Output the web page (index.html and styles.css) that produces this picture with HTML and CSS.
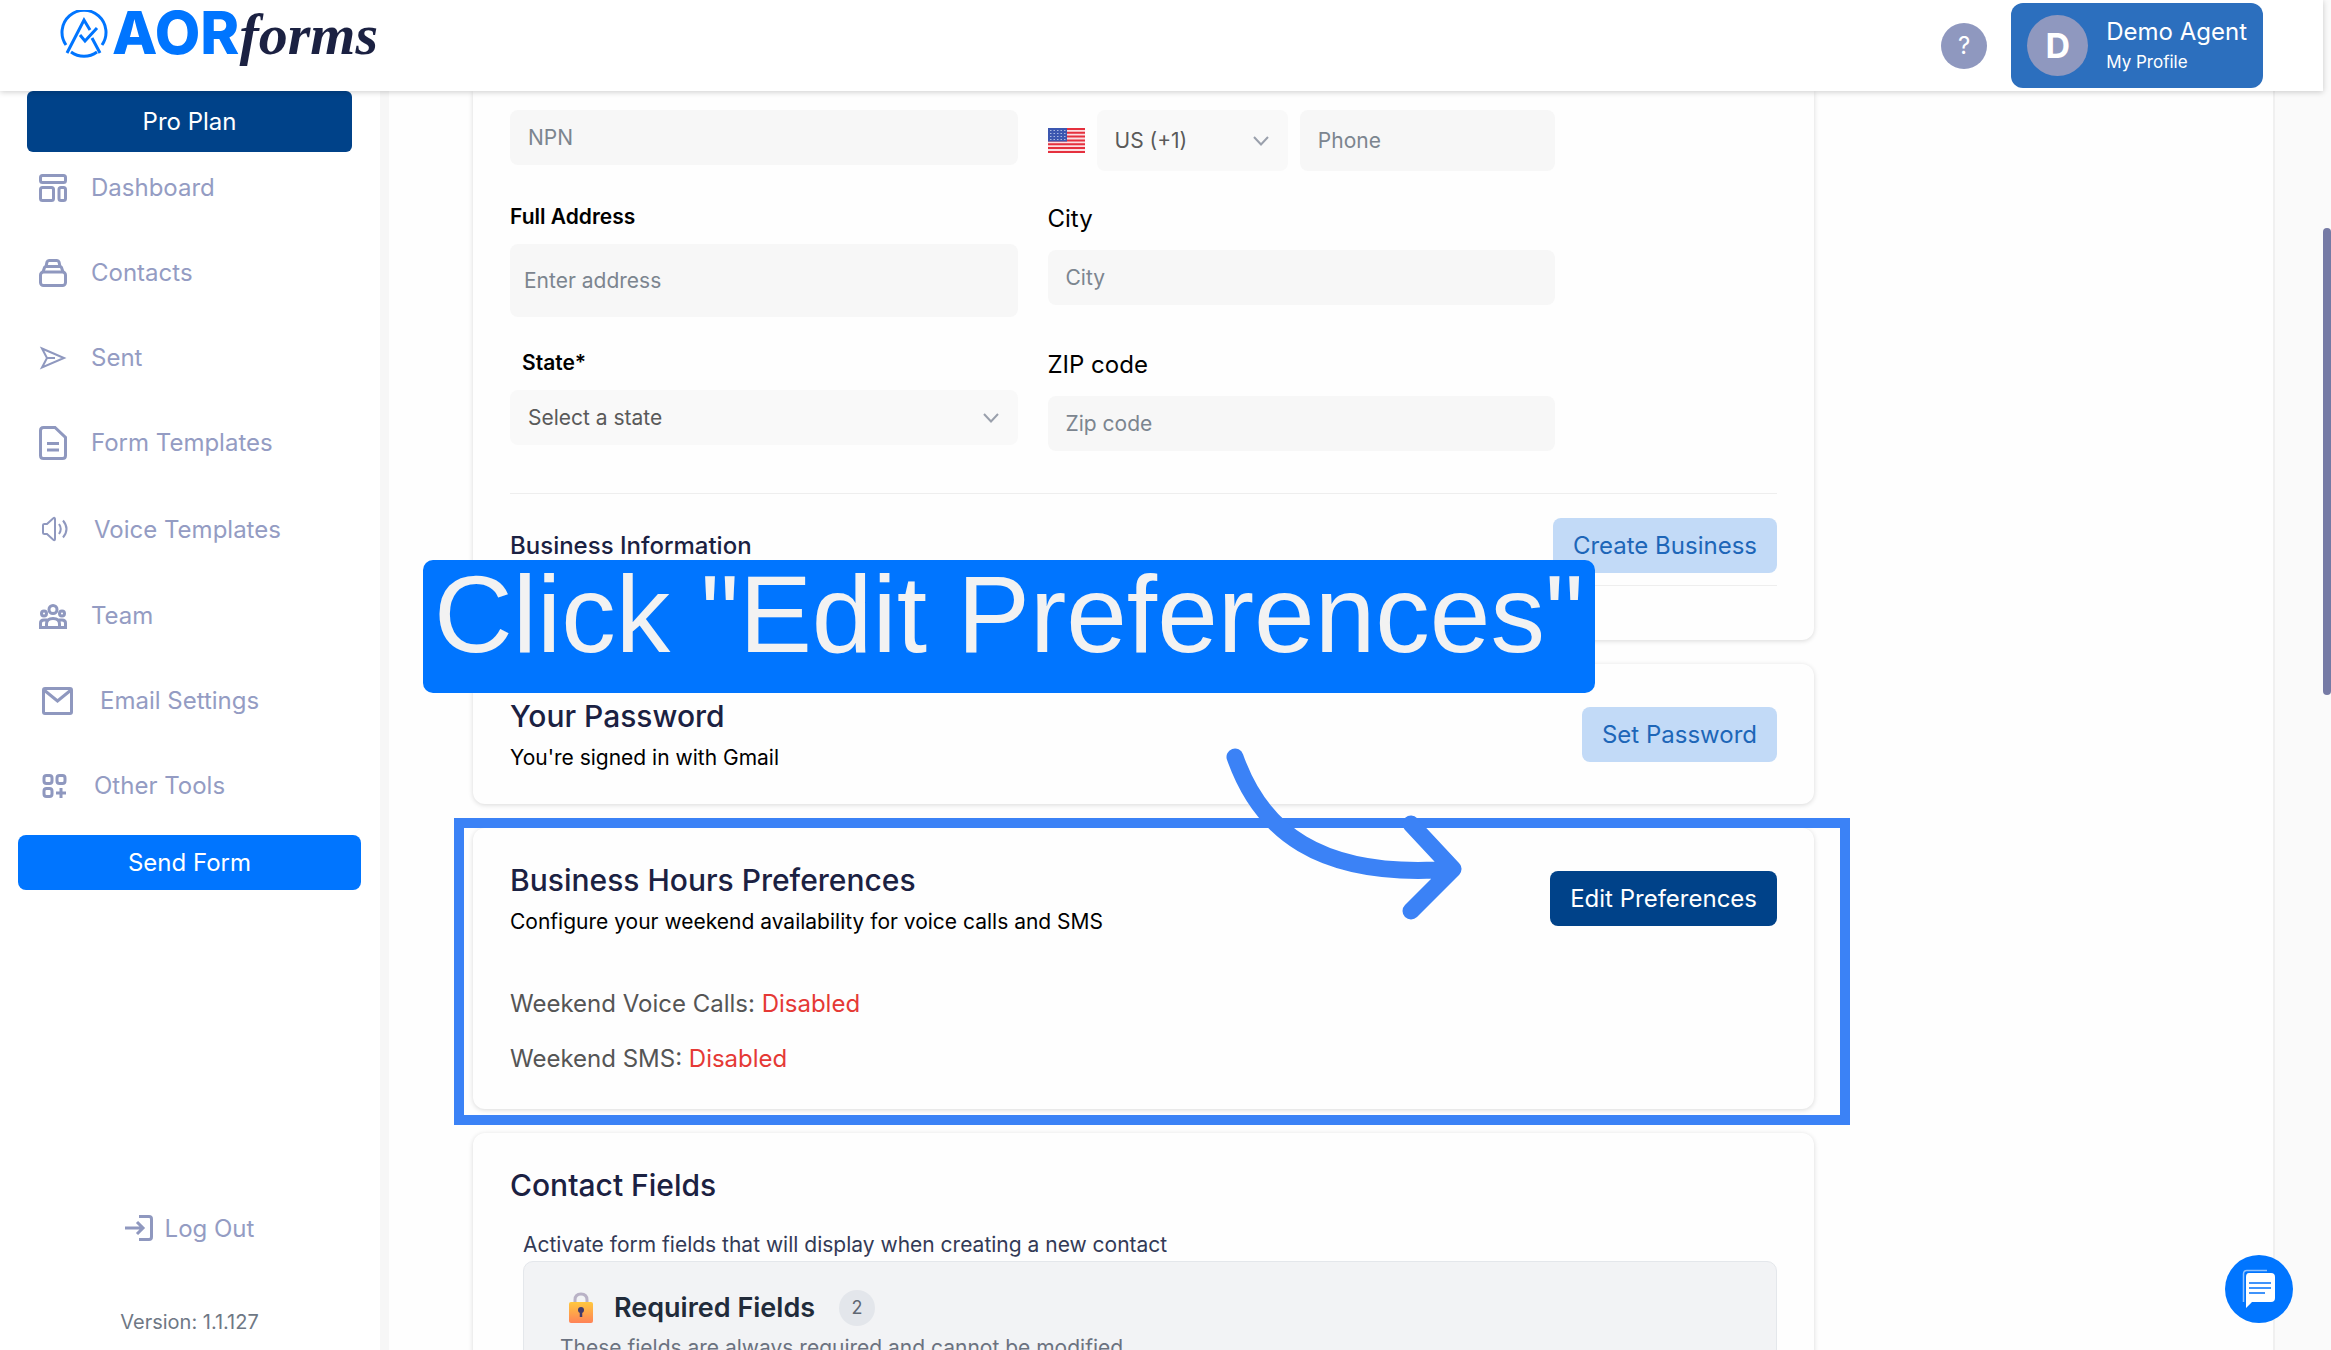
FILE: index.html
```html
<!DOCTYPE html>
<html lang="en">
<head>
<meta charset="utf-8">
<meta name="viewport" content="width=device-width, initial-scale=1">
<title>AORforms - My Profile</title>
<link rel="stylesheet" href="styles.css">
</head>

<body>
<header class="topbar">
  <a class="logo" href="#">
    <svg class="logo-mark" viewBox="0 0 48 48" fill="none" stroke="#0075ff" stroke-width="3">
      <path d="M6 35A22 22 0 1 1 42 35" />
      <path d="M11 42A22 22 0 0 0 37 42" />
      <path d="M7 43L24 10L30 20M40 43L32 28" />
      <path d="M20 25L25 31L37 18" />
    </svg>
    <span class="logo-aor">AOR</span><span class="logo-forms">forms</span>
  </a>
  <div class="topbar-right">
    <button class="help" type="button">?</button>
    <a class="profile" href="#">
      <span class="avatar">D</span>
      <span class="profile-text">
        <span class="profile-name">Demo Agent</span>
        <span class="profile-link">My Profile</span>
      </span>
    </a>
  </div>
</header>

<div class="layout">
  <aside class="sidebar">
    <button class="plan" type="button">Pro Plan</button>
    <nav>
      <ul class="menu">
        <li><a href="#">
          <svg class="icon" width="28" height="28" viewBox="0 0 28 28"><rect x="1.5" y="1.5" width="25" height="7" rx="2"/><rect x="1.5" y="13.5" width="13" height="13" rx="2"/><rect x="20" y="13.5" width="6.5" height="13" rx="2"/></svg>
          Dashboard</a></li>
        <li><a href="#">
          <svg class="icon" width="28" height="28" viewBox="0 0 28 28"><rect x="1.5" y="13" width="25" height="13.5" rx="3"/><path d="M4 13L5.500 8.500Q6 7.500 7 7.500H21Q22 7.500 22.500 8.500L24 13M7 7.500L8 3Q8.500 1.500 10 1.500H18Q19.500 1.500 20 3L21 7.500"/></svg>
          Contacts</a></li>
        <li><a href="#">
          <svg class="icon thin" width="28" height="28" viewBox="0 0 28 28"><path d="M3 4.500L25 14L3 23.500L8 14ZM8 14H16"/></svg>
          Sent</a></li>
        <li><a href="#">
          <svg class="icon" width="28" height="34" viewBox="0 0 28 34"><path d="M4.500 1.500H16L26.500 11.500V29.500Q26.500 32.500 23.500 32.500H4.500Q1.500 32.500 1.500 29.500V4.500Q1.500 1.500 4.500 1.500ZM8 17.500H20M8 24H20"/></svg>
          Form Templates</a></li>
        <li class="voice"><a href="#">
          <svg class="icon thin" width="31" height="28" viewBox="0 0 31 28"><path d="M4 10Q4 9 5.500 9H8L14 3.500Q16 2 16 4V24Q16 26 14 24.500L8 19H5.500Q4 19 4 18ZM20 9Q23.500 14 20 19M24 5.500Q31 14 24 22.500"/></svg>
          Voice Templates</a></li>
        <li><a href="#">
          <svg class="icon" width="28" height="28" viewBox="0 0 28 28"><circle cx="14" cy="7.500" r="4"/><circle cx="5" cy="11.500" r="2.500"/><circle cx="23" cy="11.500" r="2.500"/><path d="M7.500 25.500V22Q7.500 16.500 14 16.500Q20.500 16.500 20.500 22V25.500ZM7.500 25.500H1.500V21Q1.500 18 5 18H8M20.500 25.500H26.500V21Q26.500 18 23 18H20"/></svg>
          Team</a></li>
        <li><a href="#">
          <svg class="icon" width="37" height="30" viewBox="0 0 37 30"><rect x="4.500" y="2.500" width="28" height="25" rx="1.500"/><path d="M5 4L18.500 15L32 4"/></svg>
          Email Settings</a></li>
        <li><a href="#">
          <svg class="icon" width="31" height="28" viewBox="0 0 31 28"><rect x="5" y="3.500" width="8" height="8" rx="2.500"/><rect x="18" y="3.500" width="8" height="8" rx="2.500"/><rect x="5" y="16.500" width="8" height="8" rx="2.500"/><path d="M22 16V26M17 21H27"/></svg>
          Other Tools</a></li>
      </ul>
    </nav>
    <button class="send" type="button">Send Form</button>
    <a class="logout" href="#">
      <svg class="icon" width="28" height="26" viewBox="0 0 28 26"><path d="M14 1.500H24Q26.500 1.500 26.500 4V22Q26.500 24.500 24 24.500H14M0 13H18M12 7L18 13L12 19"/></svg>
      Log Out
    </a>
    <p class="version">Version: 1.1.127</p>
  </aside>

  <main class="content">
    <section class="card card-first">
      <form class="fields">
        <input type="text" placeholder="NPN" aria-label="NPN">
        <div class="phone-row">
          <svg class="flag" width="37" height="25" viewBox="0 0 37 25">
            <rect width="37" height="25" fill="#fbdfe2"/>
            <path d="M0 1H37M0 4.800H37M0 8.600H37M0 12.400H37M0 16.200H37M0 20H37M0 24H37" stroke="#e5303e" stroke-width="2"/>
            <rect width="19" height="13.500" fill="#3c57b0"/>
            <path d="M2 2.500H18M2 5.500H18M2 8.500H18M2 11.500H18" stroke="#aab8e2" stroke-width="1.200" stroke-dasharray="1.500 2"/>
          </svg>
          <div class="select">
            <select aria-label="Country code"><option>US (+1)</option></select>
            <svg class="chevron" width="18" height="12" viewBox="0 0 18 12"><path d="M2 2L9 9.500L16 2"/></svg>
          </div>
          <input type="tel" placeholder="Phone" aria-label="Phone">
        </div>
        <div class="field">
          <label class="label-bold" for="address">Full Address</label>
          <input class="address" id="address" type="text" placeholder="Enter address">
        </div>
        <div class="field">
          <label for="city">City</label>
          <input id="city" type="text" placeholder="City">
        </div>
        <div class="field">
          <label class="label-bold indent" for="state">State*</label>
          <div class="select">
            <select id="state"><option>Select a state</option></select>
            <svg class="chevron" width="18" height="12" viewBox="0 0 18 12"><path d="M2 2L9 9.500L16 2"/></svg>
          </div>
        </div>
        <div class="field">
          <label for="zip">ZIP code</label>
          <input id="zip" type="text" placeholder="Zip code">
        </div>
      </form>
      <div class="business">
        <h3>Business Information</h3>
        <button class="btn btn-light" type="button">Create Business</button>
      </div>
    </section>

    <section class="card">
      <div class="card-head">
        <div>
          <h2>Your Password</h2>
          <p class="sub">You're signed in with Gmail</p>
        </div>
        <button class="btn btn-light" type="button">Set Password</button>
      </div>
      <div class="callout">Click "Edit Preferences"</div>
    </section>

    <section class="card">
      <div class="card-head">
        <div>
          <h2>Business Hours Preferences</h2>
          <p class="sub">Configure your weekend availability for voice calls and SMS</p>
        </div>
        <button class="btn btn-dark" type="button">Edit Preferences</button>
      </div>
      <div class="statuses">
        <p>Weekend Voice Calls: <span class="off">Disabled</span></p>
        <p>Weekend SMS: <span class="off">Disabled</span></p>
      </div>
      <div class="highlight"></div>
      <svg class="arrow" width="240" height="176" viewBox="0 0 240 176">
        <path d="M12 13C37 84 93 136 230 125M188 80L230 125L188 167"/>
      </svg>
    </section>

    <section class="card">
      <h2>Contact Fields</h2>
      <p class="hint">Activate form fields that will display when creating a new contact</p>
      <div class="required">
        <div class="required-head">
          <svg width="24" height="31" viewBox="0 0 24 31">
            <defs><linearGradient id="lock" x1="0" y1="0" x2="0" y2="1"><stop offset="0" stop-color="#ffc83d"/><stop offset="1" stop-color="#ff8257"/></linearGradient></defs>
            <path d="M6 12V8Q6 2 12 2Q18 2 18 8V12" fill="none" stroke="#b9b2c6" stroke-width="3"/>
            <rect y="10" width="24" height="21" rx="2" fill="url(#lock)"/>
            <circle cx="12" cy="18" r="3" fill="#433b6b"/>
            <path d="M12 18V25" stroke="#433b6b" stroke-width="2.500"/>
          </svg>
          <h3>Required Fields</h3>
          <span class="count">2</span>
        </div>
        <p>These fields are always required and cannot be modified</p>
      </div>
    </section>
  </main>
  <div class="gutter"><div class="thumb"></div></div>
</div>

<button class="chat" type="button" aria-label="Chat">
  <svg width="34" height="40" viewBox="0 0 34 40">
    <path d="M1.500 33V5Q1.500 1.500 5 1.500H25" fill="none" stroke="#8fc3ff" stroke-width="1.500"/>
    <path d="M7 4H29Q33 4 33 8V29Q33 33 29 33H10L4 39V8Q4 4 7 4Z" fill="#fff"/>
    <path d="M7 14H29M7 19H29M7 24H23" stroke="#3f93fb" stroke-width="1.800"/>
  </svg>
</button>
</body>
</html>
```

FILE: styles.css
```css
* {
  box-sizing: border-box;
}

body {
  margin: 0;
  height: 100vh;
  overflow: hidden;
  display: flex;
  flex-direction: column;
  font-family: Inter, "Open Sans", sans-serif;
  font-size: 24px;
  color: #000;
  background-color: #fafafa;
}

h2, h3, p, ul {
  margin: 0;
  padding: 0;
}

a {
  color: inherit;
  text-decoration: none;
}

button, input, select {
  font: inherit;
  border: none;
}

button {
  cursor: pointer;
}

/* top bar */
.topbar {
  position: relative;
  z-index: 2;
  flex: none;
  height: 91px;
  margin-right: 8px;
  padding: 0 60px;
  display: flex;
  justify-content: space-between;
  align-items: center;
  background-color: #fff;
  box-shadow: 0 1px 6px rgba(0, 0, 0, 0.2);
}

.logo {
  display: flex;
  align-items: baseline;
  height: 72px;
}

.logo-mark {
  width: 48px;
  height: 48px;
  margin-right: 4px;
  align-self: flex-start;
}

.logo-aor {
  font-size: 59px;
  line-height: 46px;
  font-weight: 800;
  color: #0075ff;
}

.logo-forms {
  font-family: "Liberation Serif", serif;
  font-style: italic;
  font-weight: 700;
  font-size: 58px;
  line-height: 46px;
  color: #1b2142;
}

.topbar-right {
  display: flex;
  align-items: center;
  gap: 24px;
}

.help {
  width: 46px;
  height: 46px;
  padding: 0;
  border-radius: 50%;
  color: #fff;
  background-color: #8f98bf;
}

.profile {
  display: flex;
  align-items: center;
  gap: 18px;
  height: 85px;
  padding: 0 16px;
  border-radius: 12px;
  color: #fff;
  background-color: #2c6fbe;
}

.avatar {
  width: 61px;
  height: 61px;
  border-radius: 50%;
  background-color: #8f98bf;
  font-size: 34px;
  line-height: 61px;
  font-weight: 700;
  text-align: center;
}

.profile-text {
  display: flex;
  flex-direction: column;
}

.profile-name {
  line-height: 32px;
}

.profile-link {
  font-size: 17px;
  line-height: 28px;
}

/* sidebar */
.layout {
  flex: 1;
  min-height: 0;
  display: flex;
}

.sidebar {
  flex: none;
  width: 389px;
  padding: 0 19px 14px 18px;
  display: flex;
  flex-direction: column;
  background-color: #fff;
  border-right: 9px solid #f7f7f7;
}

.plan {
  flex: none;
  height: 61px;
  margin: 0 9px;
  border-radius: 6px;
  color: #fff;
  background-color: #004289;
}

.menu {
  list-style: none;
  margin-top: -7px;
}

.menu a {
  display: flex;
  align-items: center;
  gap: 24px;
  height: 85px;
  padding-left: 21px;
  color: #949cc3;
}

.menu .voice a {
  height: 88px;
}

.icon {
  flex: none;
  fill: none;
  stroke: #8f98bf;
  stroke-width: 3;
}

.icon.thin {
  stroke-width: 2;
}

.menu a:hover,
.logout:hover {
  color: #0075ff;
}

.send {
  flex: none;
  height: 55px;
  margin-top: 7px;
  border-radius: 8px;
  color: #fff;
  background-color: #0075ff;
}

.logout {
  display: flex;
  justify-content: center;
  align-items: center;
  gap: 12px;
  height: 32px;
  margin-top: auto;
  color: #949cc3;
}

.version {
  margin-top: 64px;
  font-size: 20px;
  line-height: 28px;
  text-align: center;
  color: #6f7885;
}

/* content */
.content {
  flex: 1;
  min-width: 0;
  overflow: hidden;
  padding: 0 459px 0 84px;
  background-color: #fefefe;
  border-right: 2px solid #f0f0f0;
}

.card {
  position: relative;
  margin-bottom: 24px;
  padding: 32px 37px;
  border-radius: 12px;
  background-color: #fefefe;
  box-shadow: 0 1px 5px rgba(0, 0, 0, 0.15);
}

.card-first {
  padding-top: 19px;
  padding-bottom: 54px;
  border-radius: 0 0 12px 12px;
}

.fields {
  display: grid;
  grid-template-columns: 1fr 1fr;
  gap: 32px 30px;
  align-items: start;
  margin-right: 222px;
}

.field {
  display: flex;
  flex-direction: column;
}

.field label {
  margin-bottom: 15px;
  line-height: 32px;
}

.field .label-bold {
  margin-bottom: 13px;
  font-size: 21px;
  line-height: 28px;
  font-weight: 600;
}

.field .indent {
  padding-left: 12px;
}

input, select {
  width: 100%;
  height: 55px;
  padding: 0 18px;
  border-radius: 8px;
  font-size: 21px;
  background-color: #f7f7f7;
}

input::placeholder {
  color: #7c858f;
}

.fields .address {
  height: 73px;
  padding: 0 14px;
}

.select {
  display: grid;
  align-items: center;
}

.select select,
.chevron {
  grid-area: 1 / 1;
}

.select select {
  appearance: none;
  color: #5a5a5a;
  background-color: #f9f9f9;
}

.chevron {
  justify-self: end;
  margin-right: 18px;
  fill: none;
  stroke: #9aa0ac;
  stroke-width: 2;
  pointer-events: none;
}

.phone-row {
  display: grid;
  grid-template-columns: 37px 3fr 4fr;
  align-items: center;
  gap: 12px;
}

.phone-row input,
.phone-row select {
  height: 61px;
}

.business {
  display: flex;
  justify-content: space-between;
  align-items: center;
  margin-top: 42px;
  padding: 24px 0 12px;
  border-top: 1px solid #eee;
  border-bottom: 1px solid #eee;
}

.business h3 {
  font-size: 24px;
  font-weight: 500;
  color: #1b2142;
}

.btn {
  height: 55px;
  padding: 0 20px;
  border-radius: 8px;
}

.btn-light {
  color: #1d66b8;
  background-color: #c2daf7;
}

.btn-dark {
  color: #fff;
  background-color: #004289;
}

.card-head {
  display: flex;
  justify-content: space-between;
  align-items: center;
}

h2 {
  font-size: 30px;
  line-height: 40px;
  font-weight: 500;
  color: #1b2142;
}

.sub {
  margin-top: 8px;
  font-size: 21px;
  line-height: 28px;
}

.statuses {
  display: flex;
  flex-direction: column;
  gap: 19px;
  margin-top: 50px;
  line-height: 36px;
  color: #555;
}

.off {
  color: #e53935;
}

.hint {
  margin: 26px 0 2px 13px;
  font-size: 21px;
  line-height: 28px;
  color: #333a56;
}

.required {
  margin-left: 13px;
  padding: 27px 36px;
  border: 1px solid #e4e7eb;
  border-radius: 10px;
  background-color: #f2f3f5;
}

.required-head {
  display: flex;
  align-items: center;
  padding-left: 9px;
}

.required h3 {
  margin: 0 24px 0 21px;
  font-size: 27px;
  line-height: 37px;
  font-weight: 600;
  color: #212b3a;
}

.count {
  width: 36px;
  height: 36px;
  border-radius: 50%;
  font-size: 18px;
  line-height: 36px;
  text-align: center;
  color: #5f6773;
  background-color: #e3e6eb;
}

.required p {
  margin-top: 8px;
  font-size: 21px;
  line-height: 28px;
  color: #6b7280;
}

/* guide overlays */
.callout {
  position: absolute;
  z-index: 1;
  top: -104px;
  left: -50px;
  height: 133px;
  padding: 0 11px;
  border-radius: 10px;
  font-family: "Liberation Sans", Arial, sans-serif;
  font-size: 109px;
  line-height: 108px;
  white-space: nowrap;
  color: #f2f2f2;
  background-color: #0075ff;
}

.highlight {
  position: absolute;
  top: -10px;
  right: -36px;
  bottom: -16px;
  left: -19px;
  border: 10px solid #3b82f6;
  pointer-events: none;
}

.arrow {
  position: absolute;
  top: -84px;
  left: 750px;
  fill: none;
  stroke: #3b82f6;
  stroke-width: 17;
  stroke-linecap: round;
  stroke-linejoin: round;
  pointer-events: none;
}

/* right gutter and chat */
.gutter {
  flex: none;
  width: 56px;
  padding-top: 137px;
}

.thumb {
  width: 8px;
  height: 467px;
  margin-left: auto;
  border-radius: 4px;
  background-color: #757aa5;
}

.chat {
  position: fixed;
  z-index: 3;
  right: 38px;
  bottom: 27px;
  width: 68px;
  height: 68px;
  padding: 0;
  display: flex;
  justify-content: center;
  align-items: center;
  border-radius: 50%;
  background-color: #0075ff;
}
```
